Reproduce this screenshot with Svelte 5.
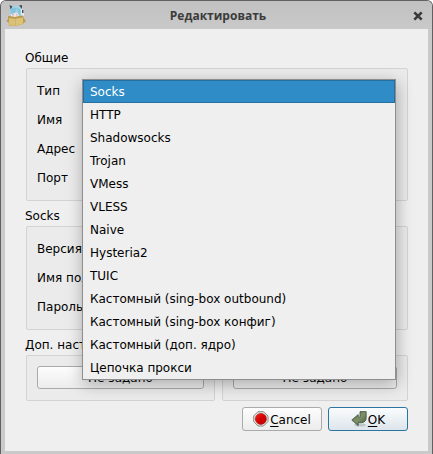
<script>
  const types = [
    'Socks', 'HTTP', 'Shadowsocks', 'Trojan', 'VMess', 'VLESS', 'Naive', 'Hysteria2', 'TUIC',
    'Кастомный (sing-box outbound)', 'Кастомный (sing-box конфиг)', 'Кастомный (доп. ядро)', 'Цепочка прокси'
  ];
  const common = ['Тип', 'Имя', 'Адрес', 'Порт'];
  const socks = ['Версия', 'Имя пользователя', 'Пароль'];
  let selected = $state(0);
</script>

<div class="window">
  <header>
    <svg class="app" width="20" height="24" viewBox="0 0 20 24">
      <path d="M4 12V5Q5 1.500 10 1.500T16 5L17 12Z" fill="#a3d3e2" />
      <path d="M3.500 1 6.500 2.500 4.500 5.500ZM13 1.500 16 1 16 5Z" fill="#4a4a58" />
      <path d="M15 5 18 6 18 12 15 12Z" fill="#e4e6ea" />
      <path d="M16 6h1.500v3H16z" fill="#4d5060" />
      <path d="M5 9.500Q9 7.500 12.500 9.500V13H5Z" fill="#f3e3df" />
      <path d="M4.500 5Q8 2.500 11 4L9 9 5 10ZM11 4 14 5 14.500 12 12.500 10Z" fill="#84c4dc" />
      <path d="M6 10.500h2v.7H6zM10 10.500h1.500v.7H10z" fill="#b58f91" />
      <path d="M2 12 9 13 17 11.500 18 20 10 22 3 22Z" fill="#cfb465" />
      <path d="M3 14.500H9V21.500L3.500 21Z" fill="#d9c277" />
      <path d="M10 14 17 13.500V19.500L10 21.500Z" fill="#dac278" />
      <path d="M.5 17.500 3 13V18.500ZM17 12.500 20 17.500 17 19Z" fill="#bd9a4d" />
      <path d="M2 12 9 13 17 11.500V13.200L9 14.700 2 13.800Z" fill="#b8984e" />
    </svg>
    <h1>Редактировать</h1>
    <svg class="close" width="10" height="10" viewBox="0 0 10 10">
      <path d="M1.300 1.300 8.700 8.700M8.700 1.300 1.300 8.700" stroke="#3b3b3b" stroke-width="2.600" />
    </svg>
  </header>

  <main>
    <h2 class="first">Общие</h2>
    <section class="box common">
      {#each common as label}<div class="row">{label}</div>{/each}
    </section>
    <h2 class="mid">Socks</h2>
    <section class="box socks">
      {#each socks as label}<div class="row">{label}</div>{/each}
    </section>
    <h2 class="extra">Доп. настройки</h2>
    <div class="pair">
      <section class="box"><button>Не задано</button></section>
      <section class="box"><button>Не задано</button></section>
    </div>
    <footer>
      <button class="action">
        <svg width="16" height="16" viewBox="0 0 16 16">
          <defs>
            <linearGradient id="red" x1="0" y1="0" x2="1" y2="1"><stop stop-color="#f02a28" /><stop offset=".5" stop-color="#d60000" /><stop offset="1" stop-color="#b80000" /></linearGradient>
          </defs>
          <path d="M5 .7h5.500L15 5v5.500L10.500 15H5L.7 10.500V5Z" fill="#e6e6e1" stroke="#858782" />
          <circle cx="7.900" cy="7.900" r="5.500" fill="url(#red)" stroke="#a90000" stroke-width=".6" />
        </svg><span><u>C</u>ancel</span>
      </button>
      <button class="action ok">
        <svg width="16" height="16" viewBox="0 0 16 16">
          <defs><linearGradient id="green" x1="0" y1="0" x2="1" y2="1"><stop stop-color="#5d6d4c" /><stop offset=".5" stop-color="#7d906a" /><stop offset="1" stop-color="#485b3b" /></linearGradient></defs>
          <ellipse cx="9" cy="14" rx="6" ry="1.600" fill="#a9b1b5" opacity=".6" />
          <path d="M9 .6h6.200v5.900q0 4.600-4.600 5.200H7.200v3L.8 9 7.200 3.600v2.600H9Z" fill="url(#green)" stroke="#46533c" stroke-width=".8" />
        </svg><span><u>O</u>K</span>
      </button>
    </footer>
  </main>

  <ul class="popup">
    {#each types as type, i}
      <li class:selected={selected === i}>{type}</li>
    {/each}
  </ul>
</div>

<style>
  :global(body) { background: #fff; overflow: hidden; }
  .window {
    position: relative;
    box-sizing: border-box;
    width: 433px;
    height: 454px;
    padding: 0 4px 3px;
    border: 1px solid #626060;
    border-bottom: 0;
    border-radius: 6px 6px 0 0;
    background: #cbcaca;
    color: #000;
    font: 12px/16px "DejaVu Sans", sans-serif;
    overflow: hidden;
  }
  header {
    display: flex;
    align-items: center;
    height: 28px;
    margin: 0 -4px;
    padding: 0 9px 0 5px;
    background: linear-gradient(#c1c1c1, #c9c9c9);
  }
  h1 {
    flex: 1;
    margin: 1px 0 0;
    padding-right: 3px;
    text-align: center;
    color: #3b3b3b;
    font: bold 12px/18px "Open Sans", sans-serif;
  }
  .app { margin-top: 1px; }
  .close { margin-top: 1px; }
  main {
    box-sizing: border-box;
    height: 422px;
    padding: 21px 20px 0 21px;
    background: #efefef;
  }
  h2 { height: 16px; margin: 0 -1px; font: inherit; white-space: nowrap; }
  .first { margin-bottom: 2px; }
  .mid, .extra { margin-top: 7px; margin-bottom: 2px; }
  .box {
    box-sizing: border-box;
    border: 1px solid #d3d3d3;
    border-radius: 2px;
    background: #ebebeb;
    padding: 10px;
  }
  .common { height: 133px; padding-top: 8px; }
  .socks { height: 104px; padding-top: 8px; }
  .row { height: 29px; line-height: 29px; white-space: nowrap; }
  .pair { display: flex; gap: 7px; }
  .pair .box { width: 189px; height: 46px; }
  .pair .box + .box { width: 186px; }
  button {
    box-sizing: border-box;
    display: block;
    width: 100%;
    height: 23px;
    margin: 0;
    padding: 0;
    border: 1px solid #aaa;
    border-radius: 3px;
    background: linear-gradient(#fdfdfd, #ececec);
    color: #000;
    font: inherit;
  }
  .pair button { line-height: 23px; }
  footer { display: flex; justify-content: flex-end; gap: 6px; margin-top: 6px; }
  .action {
    display: flex;
    align-items: center;
    justify-content: center;
    width: 80px;
    height: 24px;
  }
  .action svg { margin-right: 1px; }
  .action span { padding-top: 1px; }
  .ok { border-color: #2b75a4; background: linear-gradient(#fafcfd, #dde5eb); }
  u { text-underline-offset: 2px; }
  .popup {
    position: absolute;
    left: 81px;
    top: 78px;
    box-sizing: border-box;
    width: 314px;
    height: 301px;
    margin: 0;
    padding: 0;
    border: 1px solid #8e8e8e;
    background: #efefef;
    box-shadow: 1px 4px 15px rgba(0, 0, 0, .3);
    list-style: none;
  }
  li {
    box-sizing: border-box;
    height: 23px;
    padding: 0 6px;
    border: 1px solid transparent;
    line-height: 23px;
    white-space: nowrap;
  }
  .selected { background: #308cc6; border-color: #2570a0; color: #fff; }
</style>
